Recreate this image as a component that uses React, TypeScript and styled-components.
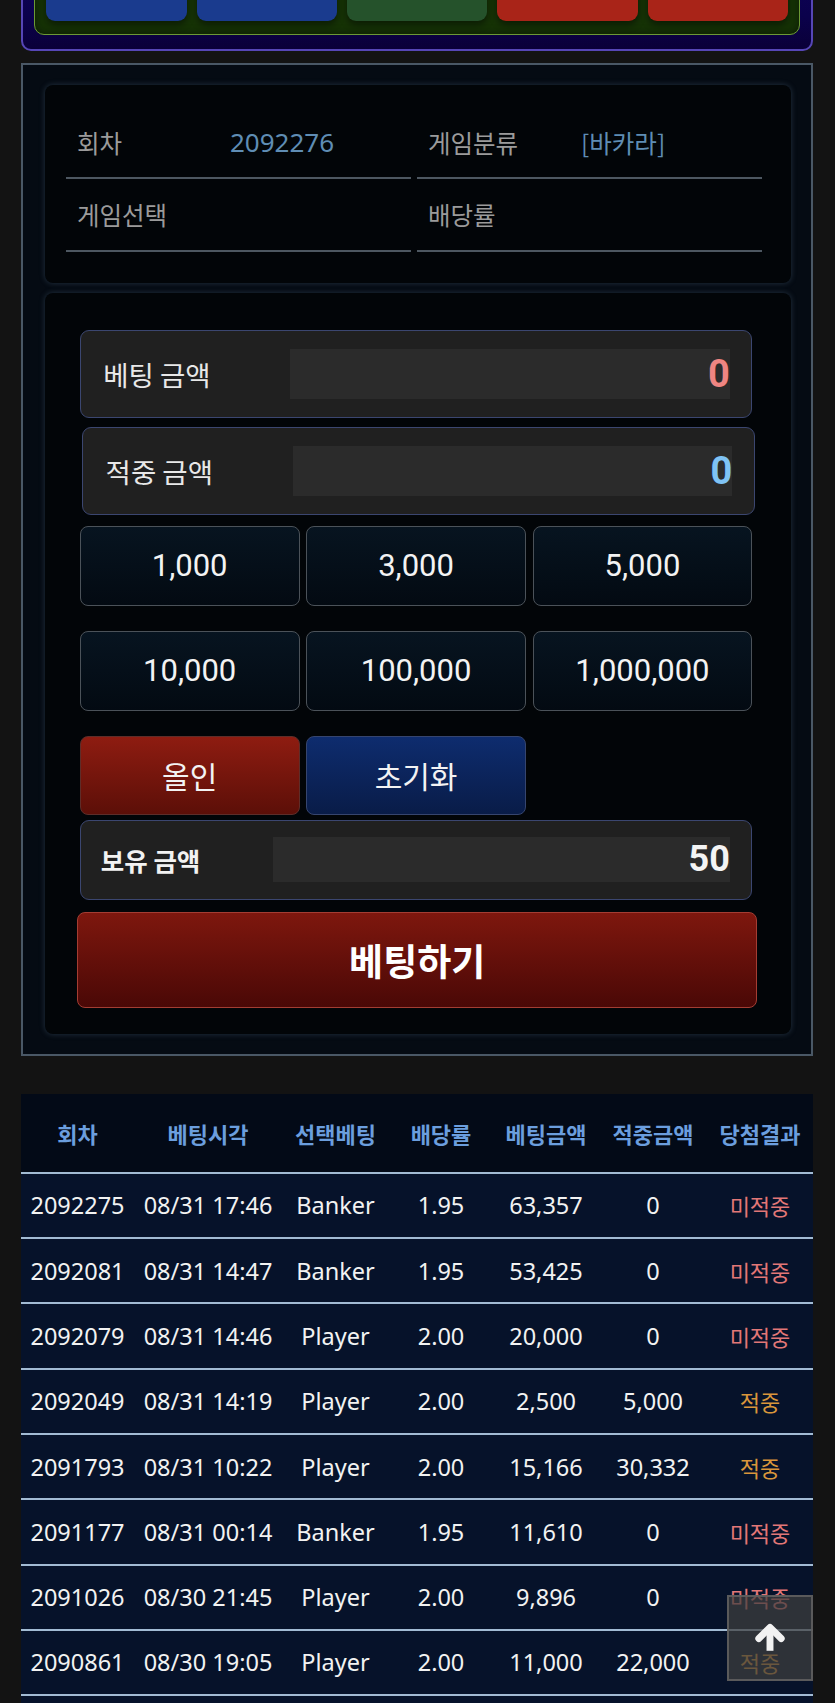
import React from 'react';
import styled, { createGlobalStyle } from 'styled-components';

const GlobalStyle = createGlobalStyle`
  html, body { margin: 0; padding: 0; background: #131313; }
  html { scrollbar-width: none; }
  ::-webkit-scrollbar { display: none; }
  body { font-family: "Noto Sans", "Noto Sans CJK KR", sans-serif; color: #eeeeee; }
  * { box-sizing: border-box; }
`;

const Page = styled.div`
  padding: 0 22px 0 21px;
`;

/* ---------- top game panel (scrolled partly off) ---------- */
const GamePanel = styled.div`
  margin-top: -66px;
  border: 2px solid #5646b6;
  border-radius: 10px;
  background: linear-gradient(180deg, #0f0360 0%, #0b014c 70%, #0a0038 100%);
  padding: 12px 11px 14px 11.3px;
`;

const ChoiceBoard = styled.div`
  border: 1.5px solid #6c9a35;
  border-radius: 10px;
  background: #163306;
  box-shadow: inset 0 0 8px rgba(0, 0, 0, 0.5);
  padding: 12px 11px 13px 11px;
  display: grid;
  grid-template-columns: repeat(5, 1fr);
  gap: 10px;
`;

const ChoiceButton = styled.div<{ $color: string }>`
  height: 60px;
  border-radius: 9px;
  background: ${(p) => p.$color};
  box-shadow: 0 4px 7px rgba(0, 0, 0, 0.45);
`;

/* ---------- bet section ---------- */
const BetSection = styled.section`
  margin-top: 12px;
  border: 2px solid #4a5866;
  background: #050b13;
  padding: 20px 20px 20px 22px;
`;

const Card = styled.div`
  background: #020508;
  border-radius: 8px;
  box-shadow: 0 0 5px 1px rgba(55, 75, 95, 0.45);
`;

const InfoCard = styled(Card)`
  padding: 22px 29.5px 31px 21px;
  display: grid;
  grid-template-columns: 1fr 1fr;
  column-gap: 6.5px;
`;

const InfoCell = styled.div`
  height: 72.3px;
  border-bottom: 2px solid #4d5761;
  display: flex;
  align-items: center;
  padding-left: 11px;
`;

const InfoLabel = styled.span`
  width: 153px;
  flex-shrink: 0;
  font-family: "Noto Sans CJK KR", sans-serif;
  font-size: 24.5px;
  color: #9b9b9b;
`;

const InfoValue = styled.span<{ $latin?: boolean }>`
  font-family: ${(p) => (p.$latin ? '"Noto Sans", sans-serif' : '"Noto Sans CJK KR", sans-serif')};
  font-size: ${(p) => (p.$latin ? '26px' : '24.5px')};
  color: #5f8db4;
`;

const BetCard = styled(Card)`
  margin-top: 10px;
  padding: 37px 38.6px 25.7px 34.7px;
  display: flex;
  flex-direction: column;
`;

const AmountBox = styled.div<{ $shift?: number; $gap?: number }>`
  height: 88px;
  margin-top: ${(p) => p.$gap ?? 0}px;
  margin-left: ${(p) => p.$shift ?? 0}px;
  margin-right: ${(p) => -(p.$shift ?? 0)}px;
  border: 1.5px solid #3b4670;
  border-radius: 9px;
  background: #202020;
  display: flex;
  align-items: center;
  padding: 0 21.5px 0 22.5px;
`;

const AmountLabel = styled.span`
  width: 187px;
  flex-shrink: 0;
  font-family: "Noto Sans CJK KR", sans-serif;
  font-size: 27.5px;
  color: #e8e8e8;
`;

const AmountField = styled.div<{ $color: string }>`
  flex: 1;
  height: 50px;
  background: #2b2b2b;
  text-align: right;
  font-family: Roboto, sans-serif;
  font-weight: 700;
  font-size: 38px;
  line-height: 50px;
  color: ${(p) => p.$color};
`;

const ButtonGrid = styled.div<{ $gap: number }>`
  margin-top: ${(p) => p.$gap}px;
  display: grid;
  grid-template-columns: repeat(3, 1fr);
  column-gap: 6.5px;
  row-gap: 25px;
`;

const ChipButton = styled.button`
  height: 80px;
  border: 1.5px solid #4b5259;
  border-radius: 8px;
  background: linear-gradient(180deg, #071420 0%, #030a12 100%);
  color: #f3f3f3;
  font-family: Roboto, sans-serif;
  font-weight: 400;
  font-size: 31px;
  padding: 0;
`;

const ActionButton = styled.button<{ $tone: 'red' | 'blue' }>`
  height: 79px;
  border: 1.5px solid ${(p) => (p.$tone === 'red' ? '#5e2d29' : '#36456e')};
  border-radius: 8px;
  background: ${(p) =>
    p.$tone === 'red'
      ? 'linear-gradient(180deg, #8e1c11 0%, #5c0f08 100%)'
      : 'linear-gradient(180deg, #0e2c6e 0%, #091c48 100%)'};
  color: #f3f3f3;
  font-family: "Noto Sans CJK KR", sans-serif;
  font-size: 30px;
  padding: 0;
`;

const HoldBox = styled.div`
  margin-top: 5px;
  height: 80px;
  border: 1.5px solid #3b4670;
  border-radius: 9px;
  background: #202020;
  display: flex;
  align-items: center;
  padding: 0 21.5px 0 20px;
`;

const HoldLabel = styled.span`
  width: 172.5px;
  flex-shrink: 0;
  font-family: "Noto Sans CJK KR", sans-serif;
  font-weight: 700;
  font-size: 25.5px;
  color: #f2f2f2;
`;

const HoldField = styled.div`
  flex: 1;
  height: 45px;
  background: #2b2b2b;
  text-align: right;
  font-family: Roboto, sans-serif;
  font-weight: 700;
  font-size: 36px;
  line-height: 45px;
  color: #f4f4f4;
`;

const SubmitButton = styled.button`
  margin: 12px -4.6px 0 -2.3px;
  height: 96px;
  border: 1.5px solid #a43d33;
  border-radius: 8px;
  background: linear-gradient(180deg, #7e170e 0%, #4a0806 100%);
  color: #ffffff;
  font-family: "Noto Sans CJK KR", sans-serif;
  font-weight: 700;
  font-size: 37px;
  padding: 0;
`;

/* ---------- history table ---------- */
const TableWrap = styled.div`
  margin-top: 38px;
  background: #06122a;
  padding-bottom: 24px;
`;

const HistoryTable = styled.table`
  width: 100%;
  border-collapse: separate;
  border-spacing: 0;
  table-layout: fixed;
`;

const HeadCell = styled.th`
  height: 80.2px;
  padding: 0;
  background: #030a17;
  border-bottom: 2px solid #a2bbd4;
  font-family: "Noto Sans CJK KR", sans-serif;
  font-weight: 700;
  font-size: 22px;
  color: #6b9ede;
  white-space: nowrap;
  text-align: center;
`;

const BodyCell = styled.td<{ $result?: 'win' | 'lose' }>`
  height: 65.3px;
  padding: 0;
  background: #06122a;
  border-bottom: 2px solid #a2bbd4;
  text-align: center;
  white-space: nowrap;
  font-family: ${(p) => (p.$result ? '"Noto Sans CJK KR", sans-serif' : '"Noto Sans", sans-serif')};
  font-size: ${(p) => (p.$result ? '22px' : '23.5px')};
  color: ${(p) => (p.$result === 'win' ? '#d9963b' : p.$result === 'lose' ? '#e27777' : '#f2f2f2')};
`;

const ScrollTop = styled.button`
  position: fixed;
  right: 22px;
  bottom: 22px;
  width: 86px;
  height: 86px;
  padding: 0;
  border: 2px solid rgba(95, 95, 95, 0.9);
  background: rgba(62, 62, 62, 0.72);
  display: flex;
  align-items: center;
  justify-content: center;
`;

const choices = ['#1a3b8e', '#1a3b8e', '#25522b', '#a92418', '#a92418'];
const chips = ['1,000', '3,000', '5,000', '10,000', '100,000', '1,000,000'];
const colWidths = [113, 148, 107, 104, 106, 108, 106];
const headers = ['회차', '베팅시각', '선택베팅', '배당률', '베팅금액', '적중금액', '당첨결과'];

type Row = [string, string, string, string, string, string, boolean];
const rows: Row[] = [
  ['2092275', '08/31 17:46', 'Banker', '1.95', '63,357', '0', false],
  ['2092081', '08/31 14:47', 'Banker', '1.95', '53,425', '0', false],
  ['2092079', '08/31 14:46', 'Player', '2.00', '20,000', '0', false],
  ['2092049', '08/31 14:19', 'Player', '2.00', '2,500', '5,000', true],
  ['2091793', '08/31 10:22', 'Player', '2.00', '15,166', '30,332', true],
  ['2091177', '08/31 00:14', 'Banker', '1.95', '11,610', '0', false],
  ['2091026', '08/30 21:45', 'Player', '2.00', '9,896', '0', false],
  ['2090861', '08/30 19:05', 'Player', '2.00', '11,000', '22,000', true],
];

export default function App() {
  return (
    <>
      <GlobalStyle />
      <Page>
        <GamePanel>
          <ChoiceBoard>
            {choices.map((c, i) => (
              <ChoiceButton key={i} $color={c} />
            ))}
          </ChoiceBoard>
        </GamePanel>

        <BetSection>
          <InfoCard>
            <InfoCell>
              <InfoLabel>회차</InfoLabel>
              <InfoValue $latin>2092276</InfoValue>
            </InfoCell>
            <InfoCell>
              <InfoLabel>게임분류</InfoLabel>
              <InfoValue>[바카라]</InfoValue>
            </InfoCell>
            <InfoCell>
              <InfoLabel>게임선택</InfoLabel>
            </InfoCell>
            <InfoCell>
              <InfoLabel>배당률</InfoLabel>
            </InfoCell>
          </InfoCard>

          <BetCard>
            <AmountBox>
              <AmountLabel>베팅 금액</AmountLabel>
              <AmountField $color="#ef8582">0</AmountField>
            </AmountBox>
            <AmountBox $shift={2.4} $gap={9.3}>
              <AmountLabel>적중 금액</AmountLabel>
              <AmountField $color="#7fc3f5">0</AmountField>
            </AmountBox>

            <ButtonGrid $gap={11}>
              {chips.map((c) => (
                <ChipButton key={c}>{c}</ChipButton>
              ))}
            </ButtonGrid>

            <ButtonGrid $gap={25}>
              <ActionButton $tone="red">올인</ActionButton>
              <ActionButton $tone="blue">초기화</ActionButton>
            </ButtonGrid>

            <HoldBox>
              <HoldLabel>보유 금액</HoldLabel>
              <HoldField>50</HoldField>
            </HoldBox>

            <SubmitButton>베팅하기</SubmitButton>
          </BetCard>
        </BetSection>

        <TableWrap>
          <HistoryTable>
            <colgroup>
              {colWidths.map((w, i) => (
                <col key={i} style={{ width: w }} />
              ))}
            </colgroup>
            <thead>
              <tr>
                {headers.map((h) => (
                  <HeadCell key={h}>{h}</HeadCell>
                ))}
              </tr>
            </thead>
            <tbody>
              {rows.map((r) => (
                <tr key={r[0]}>
                  <BodyCell>{r[0]}</BodyCell>
                  <BodyCell>{r[1]}</BodyCell>
                  <BodyCell>{r[2]}</BodyCell>
                  <BodyCell>{r[3]}</BodyCell>
                  <BodyCell>{r[4]}</BodyCell>
                  <BodyCell>{r[5]}</BodyCell>
                  <BodyCell $result={r[6] ? 'win' : 'lose'}>{r[6] ? '적중' : '미적중'}</BodyCell>
                </tr>
              ))}
            </tbody>
          </HistoryTable>
        </TableWrap>
      </Page>

      <ScrollTop aria-label="맨 위로">
        <svg width="32" height="30" viewBox="0 0 30 28" fill="none">
          <polyline
            points="4.5,14.5 15,4 25.5,14.5"
            stroke="#f2f2f2"
            strokeWidth="6.5"
            strokeLinecap="round"
            strokeLinejoin="round"
          />
          <line x1="15" y1="6" x2="15" y2="26" stroke="#f2f2f2" strokeWidth="6.5" strokeLinecap="butt" />
        </svg>
      </ScrollTop>
    </>
  );
}
